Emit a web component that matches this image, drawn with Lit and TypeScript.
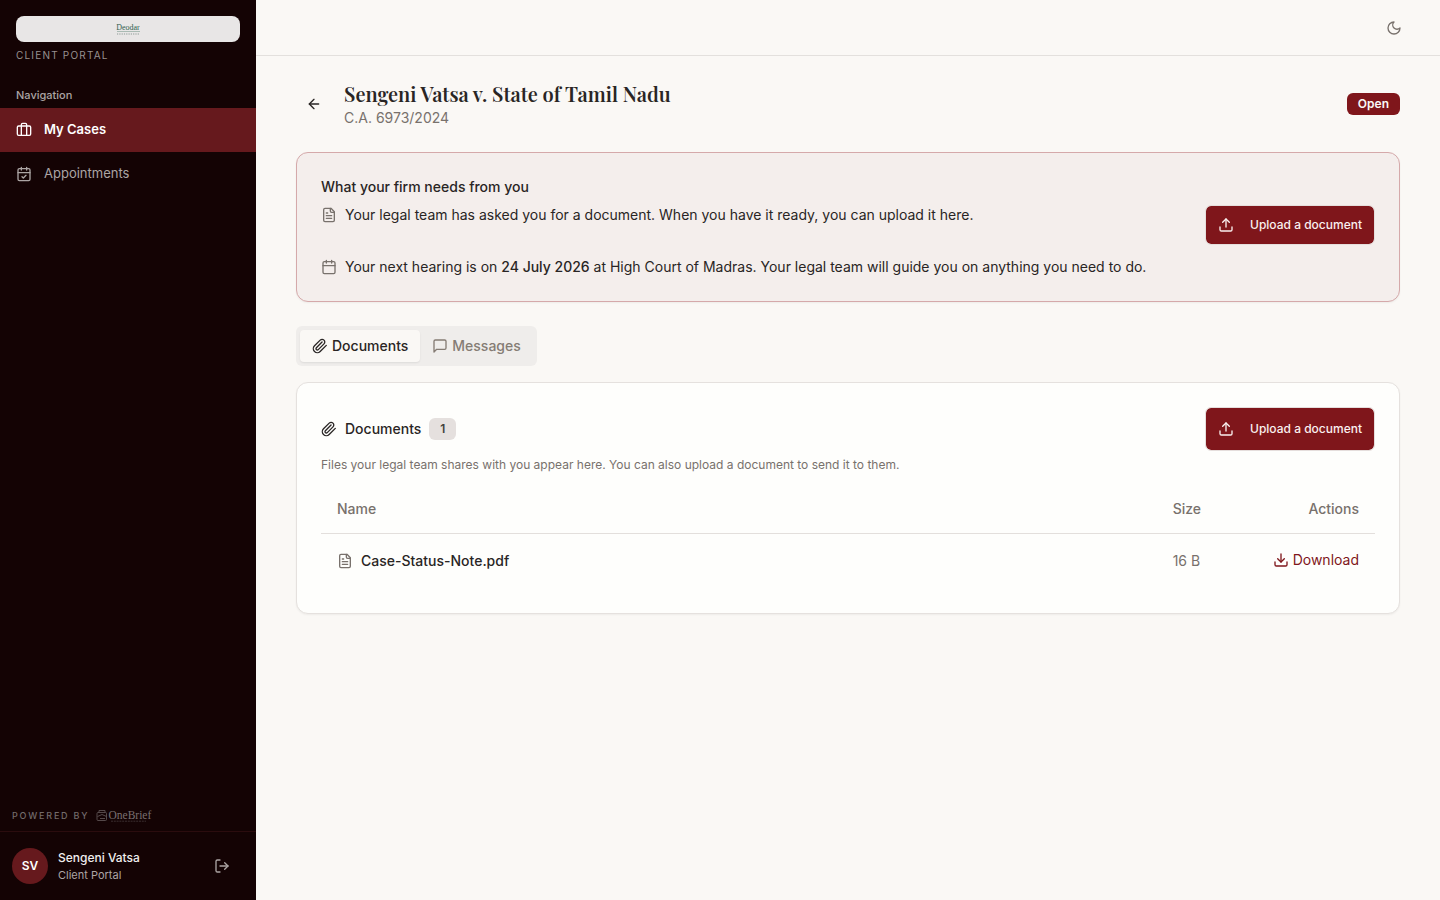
import { LitElement, html, css, svg } from "lit";
import { customElement, state } from "lit/decorators.js";
import { classMap } from "lit/directives/class-map.js";

const shapes = {
  briefcase: svg`<path d="M16 20V4a2 2 0 0 0-2-2h-4a2 2 0 0 0-2 2v16"/><rect width="20" height="14" x="2" y="6" rx="2"/>`,
  calendarCheck: svg`<path d="M8 2v4M16 2v4"/><rect width="18" height="18" x="3" y="4" rx="2"/><path d="M3 10h18"/><path d="m9 16 2 2 4-4"/>`,
  calendar: svg`<path d="M8 2v4M16 2v4"/><rect width="18" height="18" x="3" y="4" rx="2"/><path d="M3 10h18"/>`,
  logout: svg`<path d="m16 17 5-5-5-5"/><path d="M21 12H9"/><path d="M9 21H5a2 2 0 0 1-2-2V5a2 2 0 0 1 2-2h4"/>`,
  moon: svg`<path d="M12 3a6 6 0 0 0 9 9 9 9 0 1 1-9-9Z"/>`,
  back: svg`<path d="m12 19-7-7 7-7"/><path d="M19 12H5"/>`,
  file: svg`<path d="M15 2H6a2 2 0 0 0-2 2v16a2 2 0 0 0 2 2h12a2 2 0 0 0 2-2V7Z"/><path d="M14 2v4a2 2 0 0 0 2 2h4"/><path d="M10 9H8M16 13H8M16 17H8"/>`,
  upload: svg`<path d="M12 3v12"/><path d="m17 8-5-5-5 5"/><path d="M21 15v4a2 2 0 0 1-2 2H5a2 2 0 0 1-2-2v-4"/>`,
  download: svg`<path d="M12 15V3"/><path d="M21 15v4a2 2 0 0 1-2 2H5a2 2 0 0 1-2-2v-4"/><path d="m7 10 5 5 5-5"/>`,
  clip: svg`<path d="m21.440 11.050-9.190 9.190a6 6 0 0 1-8.490-8.490l8.570-8.570A4 4 0 1 1 18 8.840l-8.590 8.570a2 2 0 0 1-2.830-2.830l8.490-8.480"/>`,
  message: svg`<path d="M21 15a2 2 0 0 1-2 2H7l-4 4V5a2 2 0 0 1 2-2h14a2 2 0 0 1 2 2z"/>`,
};

const icon = (name: keyof typeof shapes) => html`<svg class="icon" viewBox="0 0 24 24" aria-hidden="true">${shapes[name]}</svg>`;

@customElement("app-root")
export class AppRoot extends LitElement {
  @state() private tab = "Documents";

  private files = [{ name: "Case-Status-Note.pdf", size: "16 B" }];

  static styles = css`
    :host {
      display: flex;
      min-height: 100vh;
      background: #faf8f5;
      color: #292524;
      font: 400 14px/20px Inter, sans-serif;
    }
    * { box-sizing: border-box; }
    h1, h2, p, ul { margin: 0; padding: 0; font: inherit; list-style: none; }
    a { color: inherit; text-decoration: none; }
    button { margin: 0; padding: 0; border: 0; background: none; color: inherit; font: inherit; cursor: pointer; }
    .icon {
      width: 16px; height: 16px; flex: none; display: block;
      fill: none; stroke: currentColor; stroke-width: 2;
      stroke-linecap: round; stroke-linejoin: round;
    }
    .sidebar {
      width: 256px; flex: none; display: flex; flex-direction: column;
      background: #140304; color: #aca5a4;
    }
    .brand { padding: 16px 16px 0; }
    .firm {
      height: 26px; display: flex; justify-content: center; align-items: center;
      border-radius: 8px; background: #e8e6e6;
    }
    .firm svg { width: 24px; height: 14px; }
    .portal { padding-top: 6px; font-size: 10px; line-height: 15px; letter-spacing: 0.12em; color: #989190; }
    .nav-title { padding: 24px 16px 5px; font-size: 11px; line-height: 16px; font-weight: 500; }
    .nav-item {
      height: 44px; display: flex; align-items: center; gap: 12px; padding: 0 16px;
      font-size: 13px; line-height: 18px;
    }
    .nav-item span { padding-bottom: 2px; }
    .nav-item.active { background: #66191d; color: #fff; font-weight: 600; }
    .bottom { margin-top: auto; }
    .powered {
      display: flex; align-items: center; gap: 6px; padding: 0 12px 7px;
      font-size: 9px; line-height: 16px; letter-spacing: 0.2em; color: #736b6b; font-weight: 500;
    }
    .powered svg { width: 58px; height: 14px; }
    .user { display: flex; align-items: center; padding: 16px 12px; border-top: 1px solid #2b0c0e; }
    .avatar {
      width: 36px; height: 36px; display: grid; place-items: center; border-radius: 50%;
      background: #66191d; color: #fff; font-size: 12px; font-weight: 600;
    }
    .who { flex: 1; padding-left: 10px; }
    .who-name { font-size: 12px; line-height: 18px; font-weight: 500; color: #f0eeee; }
    .who-role { font-size: 11px; line-height: 16px; }
    .logout { width: 44px; height: 36px; display: grid; place-items: center; }
    .page { flex: 1; min-width: 0; }
    .topbar {
      height: 56px; display: flex; justify-content: flex-end; align-items: center;
      padding: 0 28px; border-bottom: 1px solid #e3e0dd; color: #78716c;
    }
    .theme { width: 36px; height: 36px; display: grid; place-items: center; }
    .content { padding: 24px 40px; }
    .heading { display: flex; align-items: center; gap: 12px; height: 48px; }
    .back { width: 36px; height: 36px; display: grid; place-items: center; }
    .titles { flex: 1; }
    h1 { font: 600 20px/28px "Playfair Display", "Liberation Serif", serif; }
    .number { color: #78716c; }
    .badge {
      padding: 3px 11px; border-radius: 6px; font-size: 12px; line-height: 16px; font-weight: 600;
      background: #7f161b; color: #faf8f5;
    }
    .badge.count { margin-left: 8px; background: #e5e0de; color: #44403c; }
    .card { border: 1px solid #e5e1de; border-radius: 12px; padding: 24px; background: #fefefc; box-shadow: 0 1px 2px rgb(0 0 0 / 5%); }
    .needs { margin-top: 24px; background: #f4eeec; border-color: #d5a9aa; }
    h2 { font-weight: 500; }
    .tasks { display: grid; gap: 12px; padding-top: 8px; }
    .task { display: flex; align-items: flex-start; gap: 8px; }
    .task .icon { margin-top: 2px; color: #78716c; }
    .task-text { flex: 1; }
    .task-text strong { font-weight: 500; }
    .upload {
      min-height: 40px; display: flex; align-items: center; gap: 16px; padding: 0 12px;
      border: 1px solid #e5dedc; border-radius: 6px; background: #7f161b; background-clip: padding-box; color: #faf0ef;
      font-size: 12px; font-weight: 500;
    }
    .task .upload .icon { margin: 0; color: inherit; }
    .upload.tall { min-height: 44px; }
    .tabs {
      display: inline-flex; margin: 24px 0 16px; padding: 4px; border-radius: 6px;
      background: #efedeb; color: #857c74; vertical-align: top;
    }
    .tab { height: 32px; display: flex; align-items: center; gap: 4px; padding: 0 12px; border-radius: 4px; font-weight: 500; }
    .tab.active { background: #faf8f5; color: #292524; box-shadow: 0 1px 2px rgb(0 0 0 / 8%); }
    .docs-head { display: flex; align-items: center; }
    .docs-head h2 { flex: 1; display: flex; align-items: center; }
    .docs-head h2 .icon { margin-right: 8px; }
    .hint { padding: 6px 0 12px; font-size: 12px; line-height: 16px; color: #78716c; }
    table { width: 100%; border-collapse: collapse; }
    th, td { padding: 0 16px; text-align: left; font-weight: 400; color: #78716c; }
    th { height: 48px; font-weight: 500; border-bottom: 1px solid #e3dfdc; }
    td { padding: 17px 16px 18px; vertical-align: top; }
    .size { width: 100px; }
    .actions { width: 118px; text-align: right; }
    td.actions { padding-top: 16px; }
    .file { display: flex; align-items: center; gap: 8px; }
    .file-name { color: #292524; font-weight: 500; }
    .download { display: inline-flex; align-items: center; gap: 4px; color: #7f161b; vertical-align: top; }
  `;

  private uploadButton(tall = false) {
    return html`<button class=${classMap({ upload: true, tall })}>${icon("upload")}<span>Upload a document</span></button>`;
  }

  render() {
    return html`
      <aside class="sidebar">
        <div class="brand">
          <div class="firm">
            <svg viewBox="0 0 24 14" role="img" aria-label="Deodar">
              <text x="12" y="8" text-anchor="middle" font-family="Liberation Serif, serif" font-size="8" fill="#315e50">Deodar</text>
              <path d="M1 9.500h23" stroke="#7d9c91" stroke-width=".6"/>
              <path d="M1 12h22" stroke="#8b9995" stroke-width="1.2" stroke-dasharray="1.2 1.100"/>
            </svg>
          </div>
          <div class="portal">CLIENT PORTAL</div>
        </div>
        <div class="nav-title">Navigation</div>
        <nav>
          <a class="nav-item active" href="#cases">${icon("briefcase")}<span>My Cases</span></a>
          <a class="nav-item" href="#appointments">${icon("calendarCheck")}<span>Appointments</span></a>
        </nav>
        <div class="bottom">
          <div class="powered">
            <span>POWERED BY</span>
            <svg viewBox="0 0 58 14" role="img" aria-label="OneBrief">
              <g fill="none" stroke="#5b5051" stroke-width=".9">
                <rect x="2" y="3.500" width="9.500" height="8" rx="1"/>
                <path d="M4 3.500V1.500h6v2M2.500 7.500l4.500-2 4.500 2M5 9.500h5"/>
              </g>
              <text x="13.500" y="9.500" font-family="Liberation Serif, serif" font-size="11.5" letter-spacing="0" fill="#7a7071">OneBrief</text>
              <path d="M16 12.200h35" stroke="#3b2f30" stroke-width="1" stroke-dasharray="2 .8"/>
            </svg>
          </div>
          <div class="user">
            <div class="avatar">SV</div>
            <div class="who">
              <div class="who-name">Sengeni Vatsa</div>
              <div class="who-role">Client Portal</div>
            </div>
            <button class="logout" aria-label="Log out">${icon("logout")}</button>
          </div>
        </div>
      </aside>
      <div class="page">
        <header class="topbar"><button class="theme" aria-label="Toggle theme">${icon("moon")}</button></header>
        <main class="content">
          <div class="heading">
            <a class="back" href="#cases" aria-label="Back to cases">${icon("back")}</a>
            <div class="titles">
              <h1>Sengeni Vatsa v. State of Tamil Nadu</h1>
              <p class="number">C.A. 6973/2024</p>
            </div>
            <span class="badge">Open</span>
          </div>
          <section class="card needs">
            <h2>What your firm needs from you</h2>
            <ul class="tasks">
              <li class="task">
                ${icon("file")}
                <span class="task-text">Your legal team has asked you for a document. When you have it ready, you can upload it here.</span>
                ${this.uploadButton()}
              </li>
              <li class="task">
                ${icon("calendar")}
                <span class="task-text">Your next hearing is on <strong>24 July 2026</strong> at High Court of Madras. Your legal team will guide you on anything you need to do.</span>
              </li>
            </ul>
          </section>
          <div class="tabs" role="tablist">
            ${([["Documents", "clip"], ["Messages", "message"]] as const).map(([label, glyph]) => html`
              <button role="tab" aria-selected=${this.tab === label}
                class=${classMap({ tab: true, active: this.tab === label })}
                @click=${() => (this.tab = label)}>${icon(glyph)}<span>${label}</span></button>`)}
          </div>
          <section class="card">
            <div class="docs-head">
              <h2>${icon("clip")}<span>Documents</span><span class="badge count">${this.files.length}</span></h2>
              ${this.uploadButton(true)}
            </div>
            <p class="hint">Files your legal team shares with you appear here. You can also upload a document to send it to them.</p>
            <table>
              <thead><tr><th>Name</th><th class="size">Size</th><th class="actions">Actions</th></tr></thead>
              <tbody>
                ${this.files.map((f) => html`<tr>
                  <td><span class="file">${icon("file")}<span class="file-name">${f.name}</span></span></td>
                  <td class="size">${f.size}</td>
                  <td class="actions"><a class="download" href="#download">${icon("download")}<span>Download</span></a></td>
                </tr>`)}
              </tbody>
            </table>
          </section>
        </main>
      </div>
    `;
  }
}
